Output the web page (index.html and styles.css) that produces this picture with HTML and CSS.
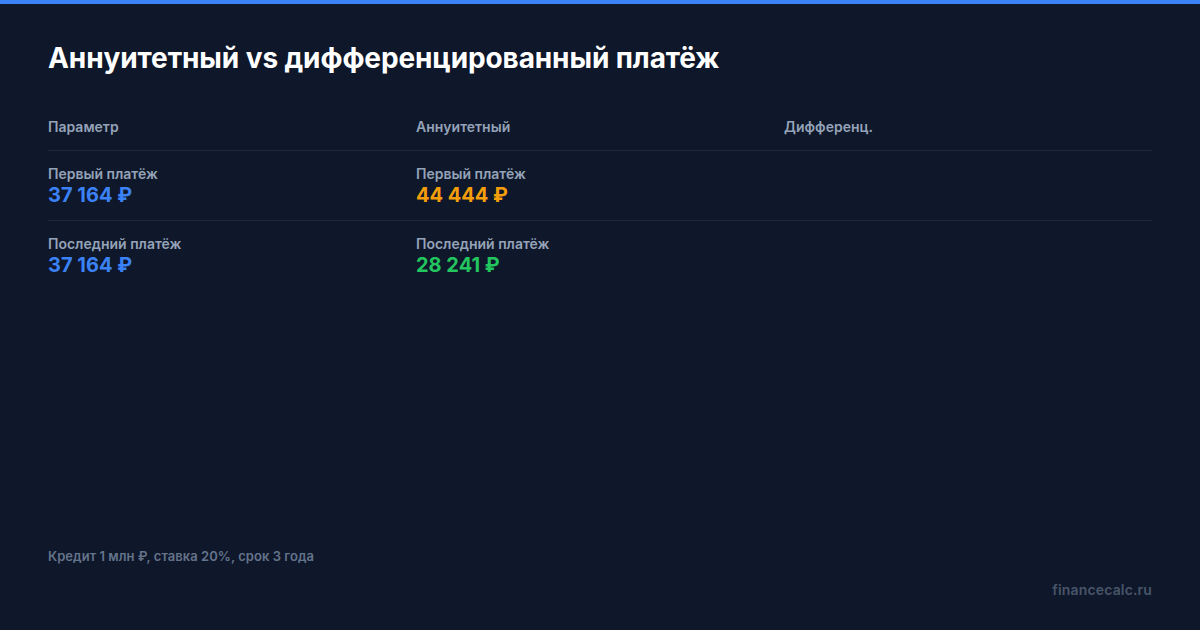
FILE: index.html
```html
<!DOCTYPE html>
<html lang="ru">
<head>
<meta charset="utf-8">
<link rel="stylesheet" href="styles.css">
</head>
<body>
<div class="page">
  <div class="topbar"></div>
  <div class="content">
    <h1 class="title">Аннуитетный vs дифференцированный платёж</h1>
    <div class="table">
      <div class="row head">
        <div class="cell">Параметр</div>
        <div class="cell">Аннуитетный</div>
        <div class="cell">Дифференц.</div>
      </div>
      <div class="row">
        <div class="cell"><div class="label">Первый платёж</div><div class="value blue">37 164 ₽</div></div>
        <div class="cell"><div class="label">Первый платёж</div><div class="value amber">44 444 ₽</div></div>
        <div class="cell"></div>
      </div>
      <div class="row">
        <div class="cell"><div class="label">Последний платёж</div><div class="value blue">37 164 ₽</div></div>
        <div class="cell"><div class="label">Последний платёж</div><div class="value green">28 241 ₽</div></div>
        <div class="cell"></div>
      </div>
    </div>
    <div class="spacer"></div>
    <div class="note">Кредит 1 млн ₽, ставка 20%, срок 3 года</div>
    <div class="brand">financecalc.ru</div>
  </div>
</div>
</body>
</html>
```
FILE: styles.css
```css
html, body {
  margin: 0;
  padding: 0;
}
body {
  background: #0f172a;
  font-family: Inter, "Noto Sans", sans-serif;
}
.page {
  width: 1200px;
  height: 630px;
  display: flex;
  flex-direction: column;
  background: #0f172a;
}
.topbar {
  height: 4px;
  background: #3b82f6;
  flex: none;
}
.content {
  flex: 1;
  display: flex;
  flex-direction: column;
  padding: 37px 48px 30px;
}
.title {
  margin: 0;
  font-size: 28px;
  line-height: 34px;
  font-weight: 700;
  color: #ffffff;
  letter-spacing: -0.1px;
}
.table {
  margin-top: 42px;
}
.row {
  display: grid;
  grid-template-columns: 1fr 1fr 1fr;
  border-bottom: 1px solid #1e293b;
  padding: 14px 0 13px;
}
.row.head {
  padding: 0 0 13px;
}
.row:last-child {
  border-bottom: none;
}
.head .cell {
  font-size: 14px;
  line-height: 20px;
  font-weight: 600;
  color: #94a3b8;
}
.label {
  font-size: 14px;
  line-height: 18px;
  font-weight: 600;
  color: #94a3b8;
}
.value {
  font-size: 20px;
  line-height: 24px;
  font-weight: 700;
}
.blue { color: #3b82f6; }
.amber { color: #f59e0b; }
.green { color: #22c55e; }
.spacer { flex: 1; }
.note {
  font-size: 13px;
  line-height: 18px;
  font-weight: 600;
  color: #64748b;
  letter-spacing: 0.05px;
}
.brand {
  margin-top: 15px;
  text-align: right;
  font-size: 14px;
  line-height: 20px;
  font-weight: 600;
  color: #475569;
  letter-spacing: 0.15px;
}
```
